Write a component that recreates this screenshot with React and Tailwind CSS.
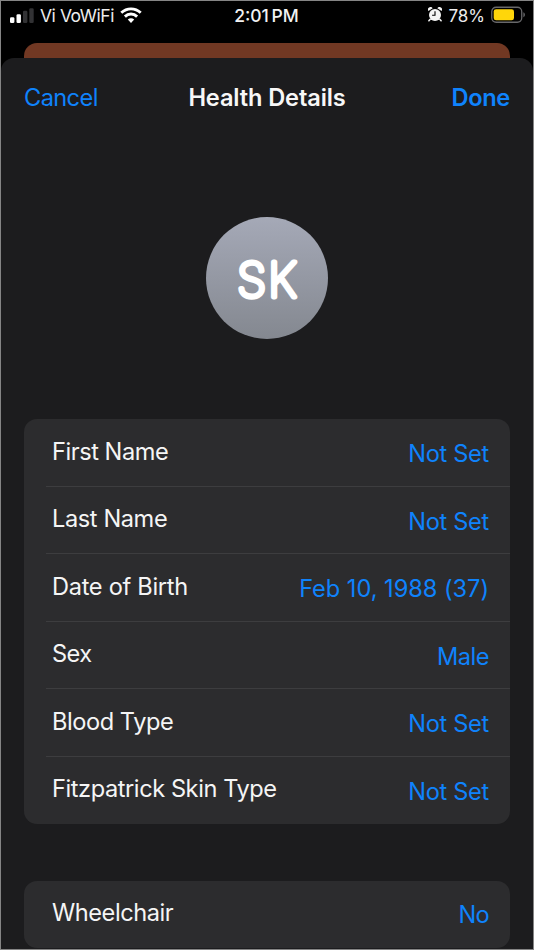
const details = [
  { label: 'First Name', value: 'Not Set', labelClass: 'tracking-[-0.46px]', valueClass: 'tracking-[-0.3px]' },
  { label: 'Last Name', value: 'Not Set', labelClass: 'tracking-[-0.4px]', valueClass: 'tracking-[-0.3px]' },
  { label: 'Date of Birth', value: 'Feb 10, 1988 (37)', labelClass: 'tracking-[-0.3px]', valueClass: 'tracking-[-0.03px]' },
  { label: 'Sex', value: 'Male', labelClass: 'tracking-[-0.6px]', valueClass: 'tracking-[-0.5px]' },
  { label: 'Blood Type', value: 'Not Set', labelClass: 'tracking-[-0.45px]', valueClass: 'tracking-[-0.3px]' },
  { label: 'Fitzpatrick Skin Type', value: 'Not Set', labelClass: 'tracking-[-0.43px]', valueClass: 'tracking-[-0.3px]' },
];

function SignalIcon() {
  return (
    <svg width="24" height="16" viewBox="0 0 24 16" className="block">
      <rect x="0" y="9.3" width="4.4" height="5.7" rx="1.3" fill="#fff" />
      <rect x="6.5" y="6.3" width="4.4" height="8.7" rx="1.3" fill="#fff" />
      <rect x="13" y="2.8" width="4.4" height="12.2" rx="1.3" fill="#323234" />
      <rect x="19.3" y="0.2" width="4.4" height="14.8" rx="1.3" fill="#323234" />
    </svg>
  );
}

function WifiIcon() {
  return (
    <svg width="22" height="16" viewBox="0 0 22 16" className="block" fill="none" stroke="#fff" strokeWidth="2.9">
      <path d="M1.3 5.8C6.8 0.5 15.2 0.5 20.7 5.8" />
      <path d="M4.9 9.6C8.4 6.2 13.6 6.2 17.1 9.6" />
      <path d="M11 16L7.8 12.5C9.6 10.8 12.4 10.8 14.2 12.5Z" fill="#fff" stroke="none" />
    </svg>
  );
}

function AlarmIcon() {
  return (
    <svg width="14" height="15" viewBox="0 0 14 15" className="block">
      <path d="M2.2 12.2L0.9 13.8M11.8 12.2L13.1 13.8" stroke="#f4f4f4" strokeWidth="1.5" strokeLinecap="round" />
      <path d="M0.4 4.1A2.5 2.5 0 0 1 4.7 1.2ZM13.6 4.1A2.5 2.5 0 0 0 9.3 1.2Z" fill="#f4f4f4" />
      <circle cx="7" cy="7.9" r="6" fill="#f4f4f4" />
      <path d="M7 4.2V8.2H4.1" fill="none" stroke="#000" strokeWidth="1.1" />
    </svg>
  );
}

function BatteryIcon() {
  return (
    <svg width="35" height="18" viewBox="0 0 35 18" className="block">
      <rect x="0.75" y="1.25" width="30" height="15" rx="4.4" fill="none" stroke="#68686a" strokeWidth="1.3" />
      <rect x="2.7" y="3.2" width="20.3" height="11.1" rx="2.4" fill="#ffd60a" />
      <path d="M32.4 6.3C34.4 7.1 34.4 10.4 32.4 11.2Z" fill="#68686a" />
    </svg>
  );
}

function Row({ label, value, labelClass, valueClass, divider }) {
  return (
    <div className="relative flex h-[67.5px] items-start justify-between pl-7 pr-[21px] text-[23.6px] leading-[30px]">
      <span className={`pt-[17.5px] text-[#f5f5f5] ${labelClass}`}>{label}</span>
      <span className={`${divider === undefined ? 'pt-[19.5px]' : 'pt-5'} text-[#0f83fc] ${valueClass}`}>{value}</span>
      {divider && <span className="absolute bottom-0 left-[22px] right-0 h-px bg-[#3d3d3f]" />}
    </div>
  );
}

export default function App() {
  return (
    <div className="flex h-[950px] w-[534px] flex-col overflow-hidden border border-[#858585] bg-black font-['Inter','Liberation_Sans',sans-serif] text-white">
      <header className="flex h-[42px] shrink-0 items-start justify-between pl-[9px] pr-[7px] pt-[6px]">
        <div className="flex w-[180px] items-start">
          <div className="pt-px"><SignalIcon /></div>
          <span className="ml-[6px] whitespace-nowrap text-[17.5px] leading-[18px] tracking-[-0.45px] text-[#ececec]">Vi VoWiFi</span>
          <div className="ml-[6px]"><WifiIcon /></div>
        </div>
        <span className="whitespace-nowrap pr-[3px] text-[17.5px] font-medium leading-[18px] text-[#f2f2f2] [word-spacing:-2px]">2:01 PM</span>
        <div className="flex w-[180px] items-start justify-end">
          <AlarmIcon />
          <span className="ml-[6px] whitespace-nowrap text-[17px] leading-[18px] text-[#ececec]">78%</span>
          <div className="ml-[6px] -mt-px"><BatteryIcon /></div>
        </div>
      </header>
      <div className="mx-[23px] h-[15px] shrink-0 rounded-t-[13px] bg-[#713823]" />
      <main className="flex grow flex-col rounded-t-[13px] bg-[#1c1c1e] px-[23px]">
        <nav className="flex h-[80px] items-center justify-between text-[23.6px] leading-[30px]">
          <span className="w-[120px] tracking-[-0.6px] text-[#0f83fc]">Cancel</span>
          <h1 className="whitespace-nowrap font-semibold tracking-[-0.12px] text-[#f7f7f7]">Health Details</h1>
          <span className="w-[120px] text-right font-semibold tracking-[-0.3px] text-[#0f83fc]">Done</span>
        </nav>
        <div className="mt-[79px] flex justify-center">
          <div className="h-[122px] w-[122px] rounded-full bg-linear-to-b from-[#a5a9b7] to-[#848890]">
            <svg width="122" height="122" viewBox="0 0 122 122" className="block">
              <text x="62" y="80" textAnchor="middle" fontSize="47" fontWeight="100" letterSpacing="2.2" fill="#fff" stroke="#fff" strokeWidth="5.2" strokeLinejoin="round">SK</text>
            </svg>
          </div>
        </div>
        <section className="mt-[80px] shrink-0 rounded-[13px] bg-[#2c2c2e]">
          {details.map((item, i) => (
            <Row key={item.label} {...item} divider={i < details.length - 1} />
          ))}
        </section>
        <section className="mt-[56.5px] shrink-0 rounded-[13px] bg-[#2c2c2e]">
          <Row label="Wheelchair" value="No" labelClass="tracking-[-0.45px]" valueClass="tracking-[-0.7px]" />
        </section>
      </main>
    </div>
  );
}
